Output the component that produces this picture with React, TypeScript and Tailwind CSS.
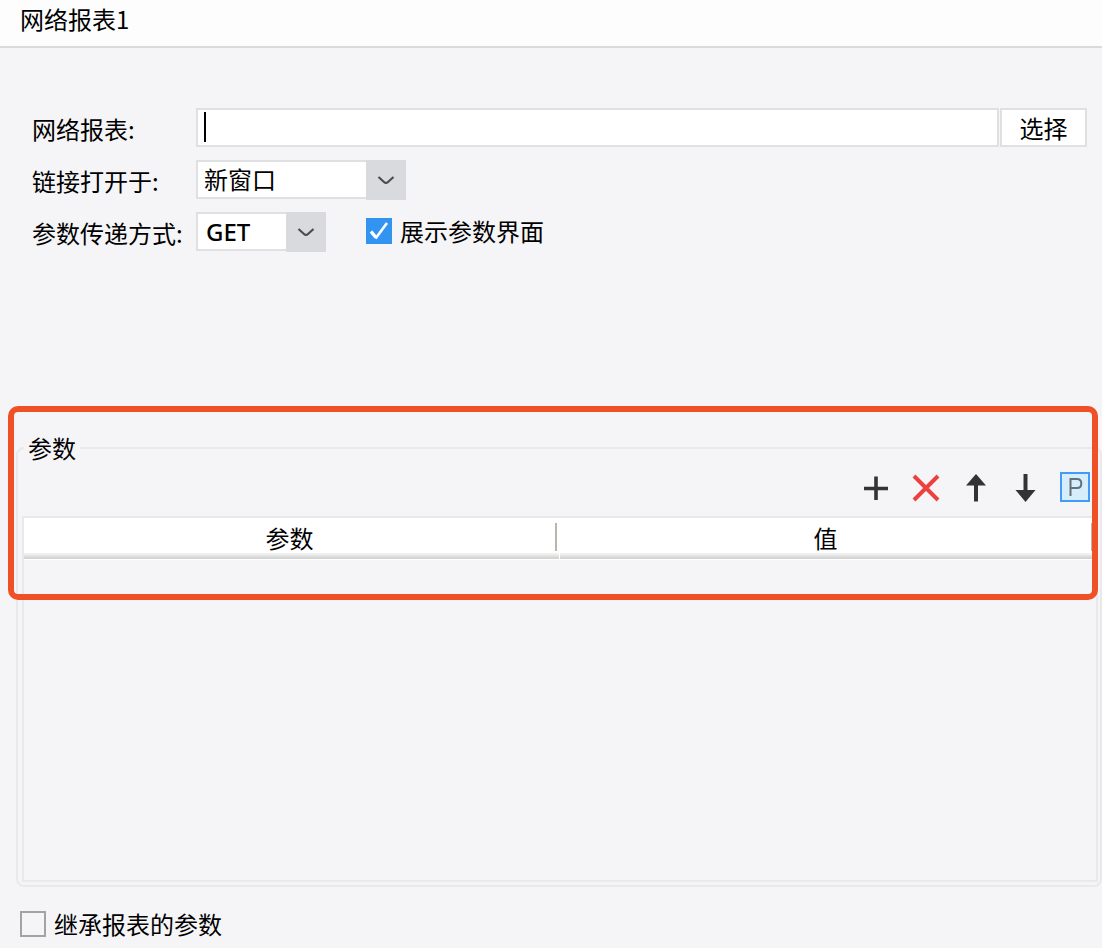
import { useState } from 'react';
import type { ReactNode } from 'react';

function Dropdown({ id, options, className }: { id: string; options: string[]; className: string }) {
  return (
    <div className={`relative h-10 ${className}`}>
      <select
        id={id}
        className="block h-[39px] w-full appearance-none rounded-none border-2 border-[#dfe0e2] bg-white pr-10 pb-[2px] pl-[6px] text-black outline-none"
      >
        {options.map((option) => (
          <option key={option}>{option}</option>
        ))}
      </select>
      <span className="pointer-events-none absolute inset-y-0 right-0 flex w-10 items-center justify-center bg-[#d9dadd]">
        <svg width="18" height="12" viewBox="0 0 18 12" fill="none" stroke="#4b4c4f" strokeWidth="2.2">
          <path d="M1.5 3 L7 8 Q9 9.8 11 8 L16.5 3" />
        </svg>
      </span>
    </div>
  );
}

function CheckBox({ id, label, initial }: { id: string; label: string; initial: boolean }) {
  const [checked, setChecked] = useState(initial);
  return (
    <div className="flex items-center gap-2">
      <span className="relative block size-[26px]">
        <input
          id={id}
          type="checkbox"
          checked={checked}
          onChange={(event) => setChecked(event.target.checked)}
          className="block size-[26px] appearance-none border-2 border-[#a3a3a4] bg-[#f5f5f7] checked:border-[#3294f0] checked:bg-[#3294f0]"
        />
        {checked && (
          <svg className="pointer-events-none absolute inset-0" width="26" height="26" viewBox="0 0 26 26" fill="none" stroke="#fff">
            <path d="M5 13.5 L10 19.5" strokeWidth="3.4" />
            <path d="M9.5 20.5 L21 5" strokeWidth="2.6" />
          </svg>
        )}
      </span>
      <label htmlFor={id}>{label}</label>
    </div>
  );
}

function ToolButton({ label, children }: { label: string; children: ReactNode }) {
  return (
    <button type="button" aria-label={label} className="block size-[30px]">
      <svg width="30" height="30" viewBox="0 0 30 30" fill="none">
        {children}
      </svg>
    </button>
  );
}

function HeaderCell({ children }: { children: ReactNode }) {
  return (
    <th scope="col" className="h-[42px] w-1/2 bg-white p-0 align-top font-normal">
      <div className="flex h-[35px] items-center pr-[3px]">
        <span className="flex-1 pt-1 text-center">{children}</span>
        <span className="mt-[3px] h-7 w-[2px] bg-[#b9b6aa]" />
      </div>
      <div className="mr-px h-[6px] border-t-2 border-b-2 border-t-[#f0f0f0] border-b-[#d4d4d4] bg-[#e2e2e2]" />
    </th>
  );
}

export default function App() {
  return (
    <main className="min-h-screen overflow-hidden bg-[#f5f5f7] pb-2 font-['Noto_Sans_CJK_SC',sans-serif] text-2xl/8 text-black">
      <header className="h-12 border-b-2 border-[#d9d9de] bg-[#fdfdfd] pt-[3px] pl-5">
        <h1>网络报表1</h1>
      </header>

      <form onSubmit={(event) => event.preventDefault()}>
        <section className="grid grid-cols-[164px_1fr] gap-y-3 pt-[60px] pr-[15px] pl-8">
          <label htmlFor="report" className="pt-[5px]">网络报表:</label>
          <div className="flex h-10 items-start gap-px">
            <div className="relative min-w-0 flex-1">
              <input
                id="report"
                type="text"
                className="block h-[39px] w-full border-2 border-[#dfe0e2] bg-white px-[6px] caret-transparent outline-none"
              />
              <span className="absolute top-1 left-2 h-[30px] w-[2px] bg-black" />
            </div>
            <button type="button" className="h-[39px] w-[87px] border-2 border-[#dfe0e2] bg-white pt-px">选择</button>
          </div>

          <label htmlFor="target" className="pt-[5px]">链接打开于:</label>
          <Dropdown id="target" options={['新窗口', '对话框', '当前窗口']} className="w-[210px]" />

          <label htmlFor="method" className="pt-[5px]">参数传递方式:</label>
          <div className="flex items-start gap-10">
            <Dropdown id="method" options={['GET', 'POST']} className="w-[130px] font-['Noto_Sans',sans-serif] font-medium [&>select]:pt-[2px] [&>select]:pl-2" />
            <div className="pt-[3px]">
              <CheckBox id="show-params" label="展示参数界面" initial={true} />
            </div>
          </div>
        </section>

        <div className="relative mt-[180px] pl-4">
          <fieldset className="min-w-0 rounded-lg border-2 border-[#e9e9eb] pt-2 pr-[2px] pb-[3px] pl-1">
            <legend className="ml-[2px] px-1">参数</legend>
            <div className="flex justify-end gap-5 pr-2">
              <ToolButton label="添加">
                <path d="M4 16.5 H28 M16 4.5 V28" stroke="#333" strokeWidth="3.6" />
              </ToolButton>
              <ToolButton label="删除">
                <path d="M4 4 L28 28 M28 4 L4 28" stroke="#eb423f" strokeWidth="4" />
              </ToolButton>
              <ToolButton label="上移">
                <path d="M16 29.5 V10" stroke="#333" strokeWidth="4" />
                <path d="M16 2 L26 13.5 H6 Z" fill="#333" />
              </ToolButton>
              <ToolButton label="下移">
                <path d="M15.5 2 V20" stroke="#333" strokeWidth="4" />
                <path d="M15.5 30 L5.5 18 H25.5 Z" fill="#333" />
              </ToolButton>
              <ToolButton label="参数面板">
                <rect x="1" y="1" width="28" height="28" fill="#d6edfb" stroke="#409bfa" strokeWidth="2" />
                <path d="M10.5 24 V7 H17 Q21.3 7 21.3 11.5 Q21.3 16 17 16 H11" stroke="#65717a" strokeWidth="2" />
              </ToolButton>
            </div>
            <div className="mt-[14px] min-h-[366px] border-2 border-[#e9e9eb]">
              <table className="w-full table-fixed border-collapse">
                <thead>
                  <tr>
                    <HeaderCell>参数</HeaderCell>
                    <HeaderCell>值</HeaderCell>
                  </tr>
                </thead>
                <tbody />
              </table>
            </div>
          </fieldset>
          <div className="pointer-events-none absolute -top-[26px] right-1 left-2 h-[194px] rounded-[10px] border-6 border-[#f05025]" />
        </div>

        <div className="pt-[21px] pl-5">
          <CheckBox id="inherit" label="继承报表的参数" initial={false} />
        </div>
      </form>
    </main>
  );
}
